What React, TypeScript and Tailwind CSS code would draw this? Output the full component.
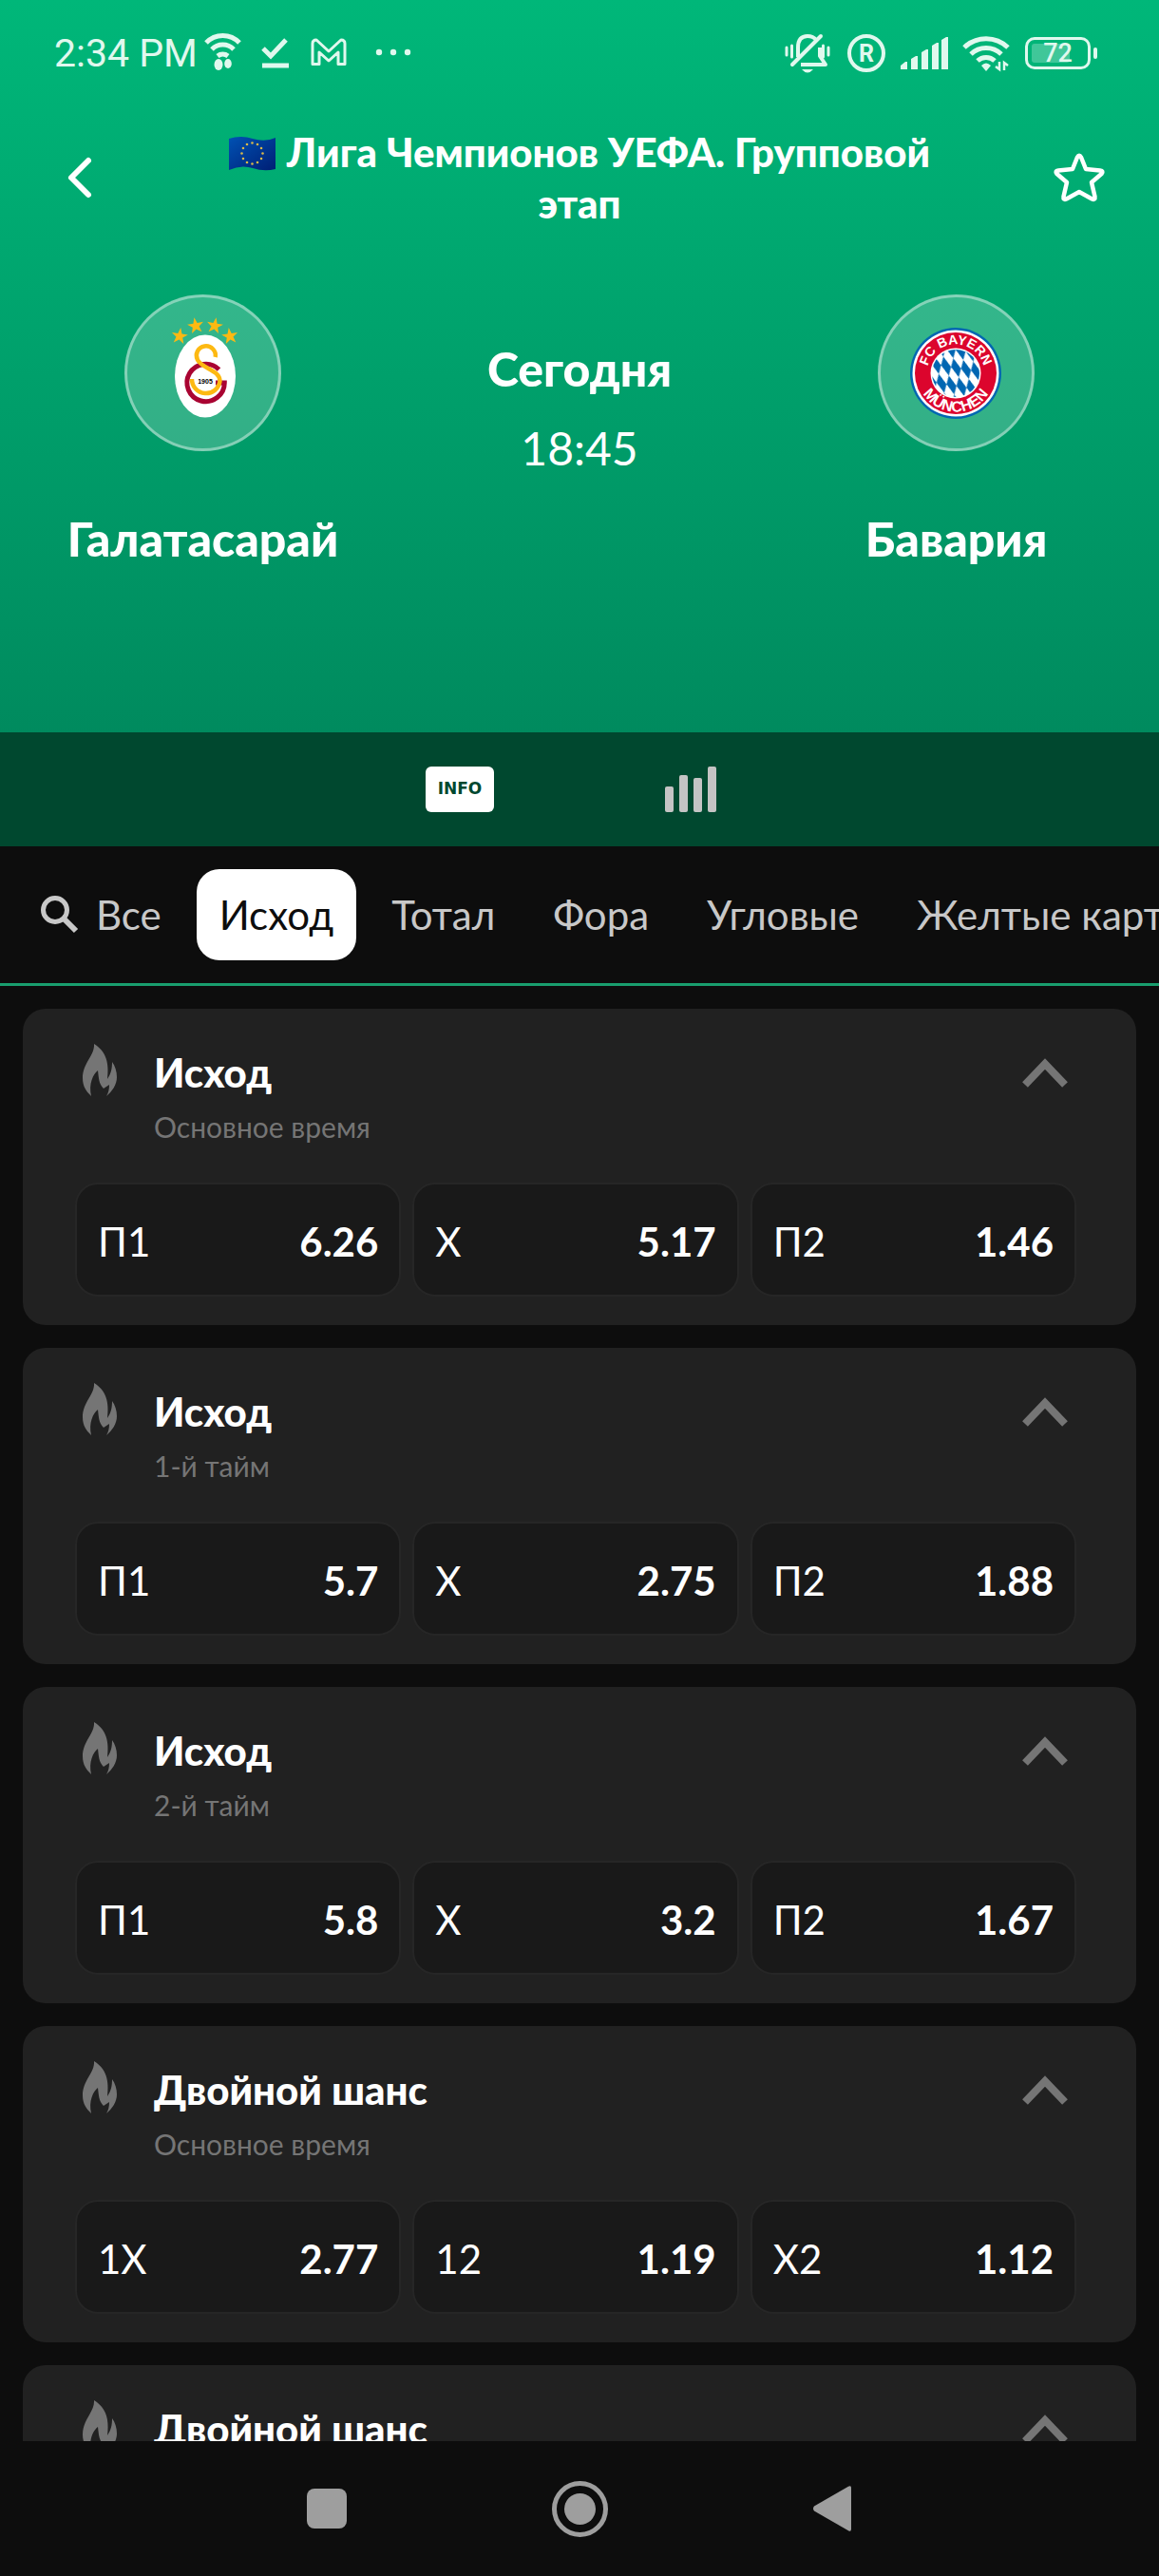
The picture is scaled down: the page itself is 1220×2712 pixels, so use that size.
import type { ReactNode } from "react";

type Outcome = {
  label: string;
  odds: string;
};

type Market = {
  title: string;
  period: string;
  outcomes: Outcome[];
};

const tabs = ["Исход", "Тотал", "Фора", "Угловые", "Желтые карточки"];

const markets: Market[] = [
  {
    title: "Исход",
    period: "Основное время",
    outcomes: [
      { label: "П1", odds: "6.26" },
      { label: "X", odds: "5.17" },
      { label: "П2", odds: "1.46" },
    ],
  },
  {
    title: "Исход",
    period: "1-й тайм",
    outcomes: [
      { label: "П1", odds: "5.7" },
      { label: "X", odds: "2.75" },
      { label: "П2", odds: "1.88" },
    ],
  },
  {
    title: "Исход",
    period: "2-й тайм",
    outcomes: [
      { label: "П1", odds: "5.8" },
      { label: "X", odds: "3.2" },
      { label: "П2", odds: "1.67" },
    ],
  },
  {
    title: "Двойной шанс",
    period: "Основное время",
    outcomes: [
      { label: "1X", odds: "2.77" },
      { label: "12", odds: "1.19" },
      { label: "X2", odds: "1.12" },
    ],
  },
  {
    title: "Двойной шанс",
    period: "1-й тайм",
    outcomes: [],
  },
];

const STAR = "M0 -1L.235 -.309H.951L.38 .118L.588 .809L0 .382L-.588 .809L-.38 .118L-.951 -.309H-.235Z";

function StatusBar() {
  return (
    <div className="flex items-start justify-between pt-8 pl-[57px] pr-[72px] text-[#e0f8ee]">
      <div className="flex items-center">
        <span className="font-['Roboto',sans-serif] text-[41px] leading-[48px]">2:34 PM</span>
        <svg className="ml-1.5 h-12 w-56" viewBox="0 0 224 48" fill="none" stroke="currentColor">
          <g strokeWidth="5">
            <path d="M3 13a24 24 0 0 1 35 0" />
            <path d="M9 20a16 16 0 0 1 23 0" />
            <path d="M15 27a9 9 0 0 1 11 0" />
          </g>
          <g fill="currentColor" stroke="none">
            <ellipse cx="16" cy="36" rx="4.5" ry="6" />
            <ellipse cx="26" cy="35" rx="3.8" ry="5" />
          </g>
          <path d="M63 19l8 8 16-17" strokeWidth="5" />
          <path d="M62 37h28" strokeWidth="5" />
          <path
            d="M115 35.500V14q0-4 4-4l13 12 13-12q4 0 4 4v21.500h-7V23l-10 9-10-9v12.500z"
            strokeWidth="3"
            strokeLinejoin="round"
          />
          <g fill="currentColor" stroke="none">
            <circle cx="185" cy="23" r="3.200" />
            <circle cx="200" cy="23" r="3.200" />
            <circle cx="215" cy="23" r="3.200" />
          </g>
        </svg>
      </div>
      <div className="flex items-center">
        <svg className="h-12 w-60" viewBox="0 0 240 48" fill="none" stroke="currentColor">
          {/* muted bell */}
          <g strokeWidth="4" strokeLinejoin="round">
            <path d="M15 28V18q0-12 10-12 6 0 9 4" />
            <path d="M18 36h26l-6-9V18" />
            <path d="M9 36L39 6" strokeLinecap="round" />
            <path d="M3 18v8M47 18v8" strokeWidth="3" strokeLinecap="round" />
            <path d="M8.500 16v12M41.500 16v12" strokeWidth="3" strokeLinecap="round" />
          </g>
          <path d="M19 41h12q-6 7-12 0z" fill="currentColor" stroke="none" />
          {/* roaming */}
          <circle cx="87" cy="24" r="18" strokeWidth="4" />
          <text
            x="87"
            y="33"
            textAnchor="middle"
            fill="currentColor"
            stroke="none"
            className="font-['Roboto',sans-serif] text-[25px] font-bold"
          >
            R
          </text>
          {/* signal */}
          <path
            d="M123 41v-4l5-4h2v8zM134 41V30l5-3h2v14zM145 41V23l5-3h2v21zM156 41V16l5-3h2v28zM166 41V10l5-3h2v34z"
            fill="currentColor"
            stroke="none"
          />
          {/* wifi */}
          <g strokeWidth="5">
            <path d="M190 18a33 33 0 0 1 46 0" />
            <path d="M197 25a23 23 0 0 1 32 0" />
            <path d="M204 32a13 13 0 0 1 18 0" />
          </g>
          <path d="M208 37q5-5 10 0l-5 6z" fill="currentColor" stroke="none" />
          <path d="M227 33v8l-4-3M232 42v-8l4 3" strokeWidth="2.500" />
        </svg>
        <div className="relative ml-3.5 flex h-[34px] w-[69px] items-center justify-center rounded-[10px] border-[3px] border-current">
          <span className="absolute inset-y-1 left-1 w-10 rounded-[3px] bg-white/25" />
          <span className="relative font-['Roboto',sans-serif] text-[27px] font-medium leading-none">72</span>
          <span className="absolute -right-2.5 top-2 h-3 w-1 rounded-full bg-current" />
        </div>
      </div>
    </div>
  );
}

function EuFlag() {
  return (
    <svg className="mr-3 inline-block h-9 w-[49px] align-[-4px]" viewBox="0 0 49 36">
      <defs>
        <linearGradient id="eu" x1="0" y1="0" x2="1" y2="1">
          <stop offset="0" stopColor="#0052b4" />
          <stop offset="1" stopColor="#001e74" />
        </linearGradient>
      </defs>
      <path d="M0 2Q12-2 25 2T49 1V34Q37 37 25 33T0 35Z" fill="url(#eu)" />
      {Array.from({ length: 12 }, (_, i) => {
        const a = (i * Math.PI) / 6;
        return (
          <circle key={i} cx={24.500 + 11 * Math.sin(a)} cy={17.500 - 11 * Math.cos(a)} r="1.300" fill="#d9b84a" />
        );
      })}
    </svg>
  );
}

function GalatasarayLogo() {
  return (
    <svg className="h-[120px] w-[74px]" viewBox="0 0 74 120">
      <g fill="#fdb912">
        <path d={STAR} transform="translate(12 21) rotate(8) scale(9)" />
        <path d={STAR} transform="translate(29 10) rotate(-10) scale(9)" />
        <path d={STAR} transform="translate(49 10) rotate(10) scale(9)" />
        <path d={STAR} transform="translate(65 21) rotate(-8) scale(9)" />
      </g>
      <ellipse cx="39" cy="63" rx="32" ry="43.500" fill="#fff" />
      <g fill="none">
        <path d="M53.500 56A19.700 19.700 0 1 0 59.300 70H50" stroke="#a90432" strokeWidth="5" />
        <path
          d="M49.700 43A10 10 0 1 0 31 46C36 55 54.500 57 54.500 68A14.800 14.800 0 0 1 25 66"
          stroke="#fdb912"
          strokeWidth="4.500"
        />
      </g>
      <text
        x="39"
        y="71"
        textAnchor="middle"
        className="fill-black font-['Liberation_Sans',sans-serif] text-[7px] font-bold"
      >
        1905
      </text>
    </svg>
  );
}

function BayernLogo() {
  return (
    <svg className="h-24 w-24" viewBox="0 0 96 96">
      <defs>
        <pattern id="lozenge" width="10" height="20" patternUnits="userSpaceOnUse" patternTransform="translate(3 6) skewX(16) skewY(10)">
          <rect width="10" height="20" fill="#fff" />
          <path d="M5 0L10 10 5 20 0 10Z" fill="#0066b2" />
        </pattern>
        <path id="arcTop" d="M17.500 48a30.500 30.500 0 0 1 61 0" />
        <path id="arcBottom" d="M7.500 48a40.500 40.500 0 0 0 81 0" />
      </defs>
      <circle cx="48" cy="48" r="48" fill="#0066b2" />
      <circle cx="48" cy="48" r="45.500" fill="#fff" />
      <circle cx="48" cy="48" r="43" fill="#dc052d" />
      <circle cx="48" cy="48" r="26.500" fill="#fff" />
      <circle cx="48" cy="48" r="25" fill="url(#lozenge)" />
      <g className="fill-white font-['Liberation_Sans',sans-serif] font-bold" textAnchor="middle">
        <text className="text-[14px]">
          <textPath href="#arcTop" startOffset="50%">FC BAYERN</textPath>
        </text>
        <text className="text-[16px]">
          <textPath href="#arcBottom" startOffset="50%">MÜNCHEN</textPath>
        </text>
      </g>
    </svg>
  );
}

function Team({ name, children }: { name: string; children: ReactNode }) {
  return (
    <div className="flex w-[35%] flex-col items-center">
      <div className="flex h-[165px] w-[165px] items-center justify-center rounded-full border-[3px] border-white/40 bg-white/20">
        {children}
      </div>
      <h2 className="mt-[62px] text-[50px] font-black leading-[60px]">{name}</h2>
    </div>
  );
}

function MatchHeader() {
  return (
    <header className="bg-linear-to-b from-[#00b779] to-[#00845a] font-['Lato',sans-serif] text-white">
      <StatusBar />
      <div className="mt-[53px] flex items-center justify-between px-14">
        <button type="button" aria-label="Назад" className="flex h-14 w-14 items-center justify-center">
          <svg className="h-12 w-8" viewBox="0 0 32 48" fill="none" stroke="currentColor" strokeWidth="6" strokeLinecap="round" strokeLinejoin="round">
            <path d="M25 6L7 24l18 18" />
          </svg>
        </button>
        <h1 className="w-[760px] text-center text-[42px] font-black leading-[54px]">
          <EuFlag />
          Лига Чемпионов УЕФА. Групповой этап
        </h1>
        <button type="button" aria-label="В избранное" className="flex h-14 w-14 items-center justify-center">
          <svg className="h-14 w-14" viewBox="0 0 56 56" fill="none" stroke="currentColor" strokeWidth="4.500" strokeLinejoin="round">
            <path d="M26 6.500q2-3.500 4 0l5 12.500 15 1.500q4 .5 1.500 3.500L41 33l3.500 15q.5 4-3 2.500L28 43l-13.500 7.500q-3.500 1.500-3-2.500L15 33 4.500 24q-2.500-3 1.500-3.500L21 19z" />
          </svg>
        </button>
      </div>
      <div className="mt-[69px] flex justify-between pb-[174px]">
        <Team name="Галатасарай">
          <GalatasarayLogo />
        </Team>
        <div className="flex flex-col items-center pt-12">
          <p className="text-[50px] font-black leading-[60px]">Сегодня</p>
          <p className="mt-6 text-[48px] leading-[60px]">18:45</p>
        </div>
        <Team name="Бавария">
          <BayernLogo />
        </Team>
      </div>
      <div className="flex h-[120px] items-center justify-center gap-[180px] bg-[#00482f] pr-[18px]">
        <button
          type="button"
          className="h-12 w-[72px] rounded-md bg-white font-['DejaVu_Sans',sans-serif] text-[17px] font-bold text-[#00482f]"
        >
          INFO
        </button>
        <button type="button" aria-label="Статистика" className="flex h-12 items-end gap-1.5">
          <span className="h-[27px] w-[9px] rounded-xs bg-[#c4c4c4]" />
          <span className="h-[39px] w-[9px] rounded-xs bg-[#c4c4c4]" />
          <span className="h-9 w-[9px] rounded-xs bg-[#c4c4c4]" />
          <span className="h-12 w-[9px] rounded-xs bg-[#c4c4c4]" />
        </button>
      </div>
    </header>
  );
}

function MarketTabs() {
  return (
    <nav className="flex shrink-0 gap-[13px] overflow-hidden border-b-[3px] border-[#199e6e] py-6 pl-[17px] text-[42px] text-[#c8c8c8]">
      <button type="button" className="flex h-24 shrink-0 items-center gap-4 px-6">
        <svg className="h-11 w-11" viewBox="0 0 44 44" fill="none" stroke="currentColor" strokeWidth="5">
          <circle cx="17" cy="17" r="12.500" />
          <path d="M26 26l13 13" strokeWidth="6" />
        </svg>
        Все
      </button>
      {tabs.map((tab, i) => (
        <button
          key={tab}
          type="button"
          className={`h-24 shrink-0 rounded-3xl px-6 whitespace-nowrap ${i === 0 ? "bg-white text-[#0d0d0d]" : ""
            }`}
        >
          {tab}
        </button>
      ))}
    </nav>
  );
}

function MarketCard({ market }: { market: Market }) {
  return (
    <section className="rounded-3xl bg-[#212121] pt-[37px] pr-[63px] pb-[30px] pl-[55px]">
      <div className="flex items-start">
        <svg className="ml-2 h-[56px] w-9 text-[#757575]" viewBox="0 0 36 56" fill="currentColor">
          <path d="M12 0C13 12 0 20 0 36c0 9 4 14 9 19C6 42 11 32 16 28c1 8 1 14 6 19l6-4c0 5-1 9-3 12 6-5 11-12 11-20 0-6-2-12-5-16 0 7-1 12-5 18C28 20 25 8 12 0z" />
        </svg>
        <div className="ml-[39px] flex-1">
          <h3 className="text-[42px] font-black leading-[60px] text-white">{market.title}</h3>
          <p className="text-[30px] leading-[54px] text-[#757575]">{market.period}</p>
        </div>
        <button type="button" aria-label="Свернуть" className="mt-3 mr-[9px]">
          <svg className="h-9 w-12" viewBox="0 0 48 36" fill="none" stroke="#757575" strokeWidth="8">
            <path d="M3 31L24 9l21 22" />
          </svg>
        </button>
      </div>
      <div className="mt-8 grid grid-cols-3 gap-3 text-[42px] text-white">
        {market.outcomes.map((outcome) => (
          <button
            key={outcome.label}
            type="button"
            className="flex h-[120px] items-center justify-between rounded-3xl border-2 border-[#262626] bg-[#191919] px-[22px] pt-1"
          >
            <span>{outcome.label}</span>
            <span className="font-bold">{outcome.odds}</span>
          </button>
        ))}
      </div>
    </section>
  );
}

function SystemNav() {
  return (
    <div className="flex h-[142px] shrink-0 items-center justify-center gap-[207px] bg-[#0d0d0d]">
      <button type="button" aria-label="Недавние" className="flex w-[59px] justify-center">
        <span className="h-[42px] w-[42px] rounded-lg bg-[#9e9e9e]" />
      </button>
      <button
        type="button"
        aria-label="Домой"
        className="flex h-[59px] w-[59px] items-center justify-center rounded-full border-[5px] border-[#9e9e9e]"
      >
        <span className="h-[33px] w-[33px] rounded-full bg-[#9e9e9e]" />
      </button>
      <button type="button" aria-label="Назад" className="flex w-[59px] justify-center">
        <svg className="h-12 w-10" viewBox="0 0 40 48" fill="#9e9e9e">
          <path d="M1 26.500q-2-2.500 0-5L37 .800q3-1.500 3 1.500v43.400q0 3-3 1.500z" />
        </svg>
      </button>
    </div>
  );
}

export default function App() {
  return (
    <div className="flex h-screen flex-col bg-[#0d0d0d] font-['Lato','Noto_Sans',sans-serif]">
      <MatchHeader />
      <MarketTabs />
      <main className="flex min-h-0 flex-1 flex-col gap-6 overflow-hidden px-6 pt-6">
        {markets.map((market, i) => (
          <div key={i} className="shrink-0">
            <MarketCard market={market} />
          </div>
        ))}
      </main>
      <SystemNav />
    </div>
  );
}
